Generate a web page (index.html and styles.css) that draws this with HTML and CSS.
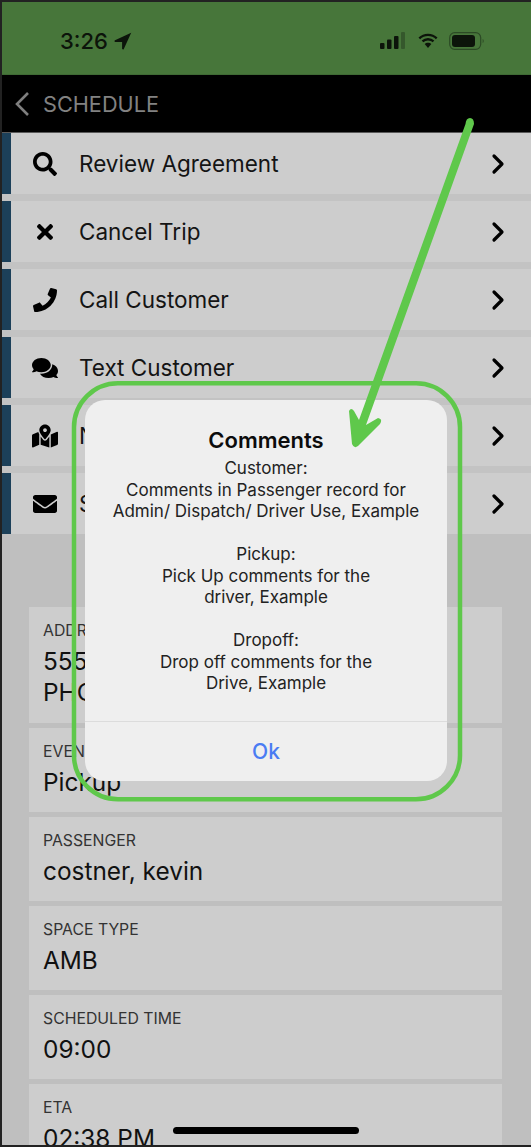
FILE: index.html
```html
<!DOCTYPE html>
<html lang="en">
<head>
<meta charset="utf-8">
<title>Comments</title>
<link rel="stylesheet" href="styles.css">
</head>
<body>
<div class="screen">
  <header class="status">
    <div class="status-left">
      <span class="time">3:26</span>
      <svg class="loc" viewBox="0 0 18 18"><path d="M17.2.8 1 8.2c-.9.4-.6 1.7.4 1.7h6.7v6.700c0 1 1.300 1.300 1.700.4z"/></svg>
    </div>
    <div class="status-right">
      <svg class="signal" viewBox="0 0 25 17"><rect x="0" y="11" width="4.500" height="6" rx="1"/><rect x="7" y="7.500" width="4.500" height="9.500" rx="1"/><rect x="14" y="4" width="4.500" height="13" rx="1"/><rect class="dim" x="21" y="0" width="4" height="17" rx="1"/></svg>
      <svg class="wifi" viewBox="0 0 22 16"><path d="M11 3c3 0 5.800 1.200 7.900 3.200l1.600-1.700A13.700 13.700 0 0 0 11 .7 13.700 13.700 0 0 0 1.500 4.500l1.600 1.700A11.400 11.400 0 0 1 11 3z"/><path d="M11 7.500c1.800 0 3.400.7 4.700 1.800l1.600-1.700A9.200 9.200 0 0 0 11 5.100a9.200 9.200 0 0 0-6.300 2.500l1.600 1.700A7 7 0 0 1 11 7.500z"/><path d="M11 9.700c-1.300 0-2.500.5-3.300 1.300L11 15l3.300-4c-.8-.8-2-1.300-3.300-1.300z"/></svg>
      <svg class="battery" viewBox="0 0 36 18"><rect class="batt-shell" x=".7" y=".7" width="31" height="16.600" rx="5"/><rect x="3" y="3" width="23" height="12" rx="3"/><path class="dim" d="M33.500 7v4c.9-.3 1.500-1.100 1.500-2s-.6-1.700-1.500-2z"/></svg>
    </div>
  </header>

  <nav class="navbar">
    <svg class="back" viewBox="0 0 16 26"><path d="M14 2 3 13l11 11"/></svg>
    <span class="nav-title">SCHEDULE</span>
  </nav>

  <ul class="actions">
    <li class="action">
      <span class="action-icon"><svg viewBox="0 0 512 512"><path d="M505 442.700L405.300 343c-4.500-4.500-10.600-7-17-7H372c27.600-35.300 44-79.700 44-128C416 93.100 322.900 0 208 0S0 93.100 0 208s93.100 208 208 208c48.300 0 92.700-16.400 128-44v16.300c0 6.400 2.500 12.500 7 17l99.700 99.700c9.400 9.400 24.600 9.400 33.900 0l28.300-28.300c9.400-9.400 9.400-24.600.1-34zM208 336c-70.700 0-128-57.200-128-128 0-70.700 57.200-128 128-128 70.700 0 128 57.200 128 128 0 70.700-57.200 128-128 128z"/></svg></span>
      <span class="action-label">Review Agreement</span>
      <svg class="chevron" viewBox="0 0 14 22"><path d="M3 3l8 8-8 8"/></svg>
    </li>
    <li class="action">
      <span class="action-icon"><svg class="icon-x" viewBox="0 0 352 512"><path d="M242.720 256l100.070-100.070c12.280-12.280 12.280-32.190 0-44.480l-22.240-22.240c-12.280-12.280-32.190-12.280-44.480 0L176 189.280 75.930 89.210c-12.280-12.280-32.190-12.280-44.480 0L9.210 111.450c-12.280 12.280-12.280 32.190 0 44.480L109.280 256 9.210 356.070c-12.280 12.280-12.280 32.190 0 44.480l22.240 22.240c12.280 12.280 32.200 12.280 44.480 0L176 322.720l100.070 100.070c12.280 12.280 32.200 12.280 44.480 0l22.240-22.240c12.280-12.280 12.280-32.190 0-44.480L242.720 256z"/></svg></span>
      <span class="action-label">Cancel Trip</span>
      <svg class="chevron" viewBox="0 0 14 22"><path d="M3 3l8 8-8 8"/></svg>
    </li>
    <li class="action">
      <span class="action-icon"><svg viewBox="0 0 512 512"><path d="M493.400 24.600l-104-24c-11.300-2.600-22.900 3.300-27.500 13.900l-48 112c-4.200 9.800-1.400 21.300 6.900 28l60.600 49.600c-36 76.700-98.900 140.500-177.200 177.200l-49.600-60.600c-6.800-8.300-18.200-11.100-28-6.900l-112 48C3.900 366.500-2 378.100.6 389.400l24 104C27.100 504.200 36.700 512 48 512c256.100 0 464-207.500 464-464 0-11.200-7.700-20.900-18.600-23.400z"/></svg></span>
      <span class="action-label">Call Customer</span>
      <svg class="chevron" viewBox="0 0 14 22"><path d="M3 3l8 8-8 8"/></svg>
    </li>
    <li class="action">
      <span class="action-icon"><svg viewBox="0 0 576 512"><path d="M416 192c0-88.400-93.100-160-208-160S0 103.600 0 192c0 34.300 14.100 65.900 38 92-13.400 30.200-35.500 54.200-35.800 54.500-2.200 2.300-2.800 5.700-1.500 8.700S4.800 352 8 352c36.600 0 66.900-12.300 88.700-25 32.200 15.700 70.300 25 111.300 25 114.900 0 208-71.600 208-160zm122 220c23.900-26 38-57.700 38-92 0-66.900-53.500-124.200-129.300-148.100.9 6.600 1.300 13.300 1.300 20.100 0 105.900-107.700 192-240 192-10.800 0-21.300-.8-31.700-1.900C207.800 439.600 281.800 480 368 480c41 0 79.100-9.200 111.300-25 21.800 12.700 52.100 25 88.700 25 3.200 0 6.100-1.900 7.300-4.800 1.300-2.900.7-6.300-1.500-8.700-.3-.3-22.400-24.200-35.800-54.500z"/></svg></span>
      <span class="action-label">Text Customer</span>
      <svg class="chevron" viewBox="0 0 14 22"><path d="M3 3l8 8-8 8"/></svg>
    </li>
    <li class="action">
      <span class="action-icon"><svg viewBox="0 0 576 512"><path d="M288 0c-69.590 0-126 56.410-126 126 0 56.260 82.350 158.800 113.900 196.020 6.390 7.540 17.820 7.540 24.200 0C331.650 284.800 414 182.260 414 126 414 56.410 357.590 0 288 0zm0 168c-23.200 0-42-18.800-42-42s18.800-42 42-42 42 18.800 42 42-18.800 42-42 42zM20.120 215.950A32.006 32.006 0 0 0 0 245.660v250.320c0 11.320 11.430 19.060 21.940 14.860L160 448V214.920c-8.840-15.980-16.070-31.540-21.250-46.420L20.120 215.950zM288 359.670c-14.070 0-27.380-6.180-36.510-16.960-19.660-23.200-40.570-49.620-59.490-76.720V448l192 64V266c-18.920 27.090-39.820 53.520-59.490 76.720-9.130 10.770-22.440 16.950-36.510 16.950zm266.060-198.510L416 224v288l139.880-55.950A31.996 31.996 0 0 0 576 426.340V176.020c0-11.320-11.430-19.060-21.940-14.860z"/></svg></span>
      <span class="action-label">Navigate</span>
      <svg class="chevron" viewBox="0 0 14 22"><path d="M3 3l8 8-8 8"/></svg>
    </li>
    <li class="action">
      <span class="action-icon"><svg viewBox="0 0 512 512"><path d="M502.300 190.800c3.900-3.100 9.700-.2 9.700 4.700V400c0 26.500-21.500 48-48 48H48c-26.500 0-48-21.500-48-48V195.600c0-5 5.700-7.800 9.700-4.700 22.400 17.400 52.100 39.500 154.100 113.600 21.100 15.400 56.700 47.800 92.200 47.600 35.700.3 72-32.800 92.300-47.600 102-74.100 131.600-96.300 154-113.700zM256 320c23.200.4 56.600-29.200 73.400-41.400 132.700-96.300 142.800-104.700 173.400-128.700 5.800-4.500 9.200-11.500 9.200-18.900v-19c0-26.500-21.500-48-48-48H48C21.500 64 0 85.500 0 112v19c0 7.400 3.400 14.300 9.200 18.900 30.600 23.900 40.700 32.400 173.400 128.700 16.800 12.200 50.200 41.800 73.400 41.400z"/></svg></span>
      <span class="action-label">Send Email</span>
      <svg class="chevron" viewBox="0 0 14 22"><path d="M3 3l8 8-8 8"/></svg>
    </li>
  </ul>

  <section class="details">
    <div class="card card-tall"><div class="card-label">ADDRESS</div><div class="card-value">5555 N 7th St<br>PHOENIX, AZ</div></div>
    <div class="card"><div class="card-label">EVENT</div><div class="card-value">Pickup</div></div>
    <div class="card"><div class="card-label">PASSENGER</div><div class="card-value">costner, kevin</div></div>
    <div class="card"><div class="card-label">SPACE TYPE</div><div class="card-value">AMB</div></div>
    <div class="card"><div class="card-label">SCHEDULED TIME</div><div class="card-value">09:00</div></div>
    <div class="card"><div class="card-label">ETA</div><div class="card-value">02:38 PM</div></div>
  </section>

  <div class="dialog">
    <div class="dialog-body">
      <h2 class="dialog-title">Comments</h2>
      <p class="dialog-text">Customer:<br>Comments in Passenger record for<br>Admin/ Dispatch/ Driver Use, Example<br><br>Pickup:<br>Pick Up comments for the<br>driver, Example<br><br>Dropoff:<br>Drop off comments for the<br>Drive, Example</p>
    </div>
    <div class="dialog-action">Ok</div>
  </div>

  <div class="home-bar"></div>

  <svg class="annotation" viewBox="0 0 531 1147">
    <rect class="anno-box" x="74" y="383.300" width="386" height="416" rx="44"/>
    <path class="anno-fill" d="M465.500 124L359 420L354 411Q351 407 349 411L352 444Q354 449 358 446L380 424Q383 419 378 418L366 425L474 124Q474 118 470 118Q466 118 465.500 124Z"/>
  </svg>
</div>
</body>
</html>
```

FILE: styles.css
```css
* { box-sizing: border-box; }

html, body {
  margin: 0;
  height: 100%;
  overflow: hidden;
  background: #222;
}

body {
  padding: 2px 0 2px 2px;
  font-family: Inter, "Liberation Sans", sans-serif;
  color: #111;
}

.screen {
  position: relative;
  height: 1143px;
  overflow: hidden;
  background: #bfbfbf;
}

.status {
  height: 73px;
  background: #47763a;
  display: flex;
  justify-content: space-between;
  align-items: center;
  padding: 5px 46px 0 58px;
  border-bottom: 1px solid #3f6a34;
}

.status-left, .status-right { display: flex; align-items: center; }

.time { font-size: 22px; font-weight: 500; color: #0c140a; }

.loc { width: 18px; height: 18px; margin-left: 6px; fill: #0c140a; }

.signal { width: 25px; height: 17px; margin-right: 12px; fill: #0c140a; }
.wifi { width: 22px; height: 16px; margin-right: 10px; fill: #0c140a; }
.battery { width: 36px; height: 18px; fill: #0c140a; }
.dim { fill: #35582c; }
.batt-shell { fill: none; stroke: #2c4a25; stroke-width: 1.200; }

.navbar {
  height: 58px;
  background: #000;
  display: flex;
  align-items: center;
  padding: 0 0 0 12px;
  border-bottom: 1px solid #5a5a5a;
}

.back { width: 16px; height: 26px; fill: none; stroke: #7f7f7f; stroke-width: 2.600; }
.nav-title { margin-left: 13px; font-size: 21.700px; color: #828282; }

.actions {
  list-style: none;
  margin: 0;
  padding: 0;
  background: #c3c3c3;
  display: flex;
  flex-direction: column;
  gap: 7px;
}

.action {
  height: 61px;
  background: #cdcdcd;
  border-left: 9px solid #1c4059;
  display: flex;
  align-items: center;
}

.action-icon {
  width: 26px;
  margin-left: 21px;
  display: flex;
  justify-content: center;
}

.action-icon svg { width: 26px; height: 24px; fill: #000; }
.action-icon .icon-x { width: 16px; }

.action-label {
  margin-left: 21px;
  flex: 1;
  font-size: 22.500px;
  color: #141414;
}

.chevron {
  width: 14px;
  height: 22px;
  margin-right: 26px;
  fill: none;
  stroke: #000;
  stroke-width: 3.200;
  stroke-linecap: round;
  stroke-linejoin: round;
}

.details {
  margin: 73px 29px 0 27px;
  display: flex;
  flex-direction: column;
  gap: 5px;
}

.card {
  height: 84px;
  padding: 15px 14px 0;
  background: #cdcdcd;
  flex: none;
}

.card-tall { height: 116px; }

.card-label {
  font-size: 15.800px;
  line-height: 18px;
  color: #333;
}

.card-value {
  margin-top: 6px;
  font-size: 24.400px;
  line-height: 31px;
  color: #111;
}

.dialog {
  position: absolute;
  left: 83px;
  top: 398px;
  width: 362px;
  height: 381px;
  background: #efefef;
  border-radius: 20px;
  display: flex;
  flex-direction: column;
}

.dialog-body {
  flex: 1;
  padding-top: 26px;
  text-align: center;
  border-bottom: 1px solid #dcdcdc;
}

.dialog-title {
  margin: 0;
  font-size: 22px;
  line-height: 28px;
  font-weight: 600;
  color: #0c0c0c;
}

.dialog-text {
  margin: 4px 0 0;
  font-size: 17px;
  line-height: 21.500px;
  color: #222;
}

.dialog-action {
  height: 59px;
  display: flex;
  align-items: center;
  justify-content: center;
  font-size: 21px;
  font-weight: 500;
  color: #4a7cf3;
}

.home-bar {
  position: absolute;
  left: 171px;
  top: 1125px;
  width: 186px;
  height: 7px;
  border-radius: 4px;
  background: #000;
}

.annotation {
  position: absolute;
  left: -2px;
  top: -2px;
  width: 531px;
  height: 1147px;
  pointer-events: none;
}

.anno-box { fill: none; stroke: #5fc84b; stroke-width: 4.500; }
.anno-fill { fill: #5fc84b; }
```
